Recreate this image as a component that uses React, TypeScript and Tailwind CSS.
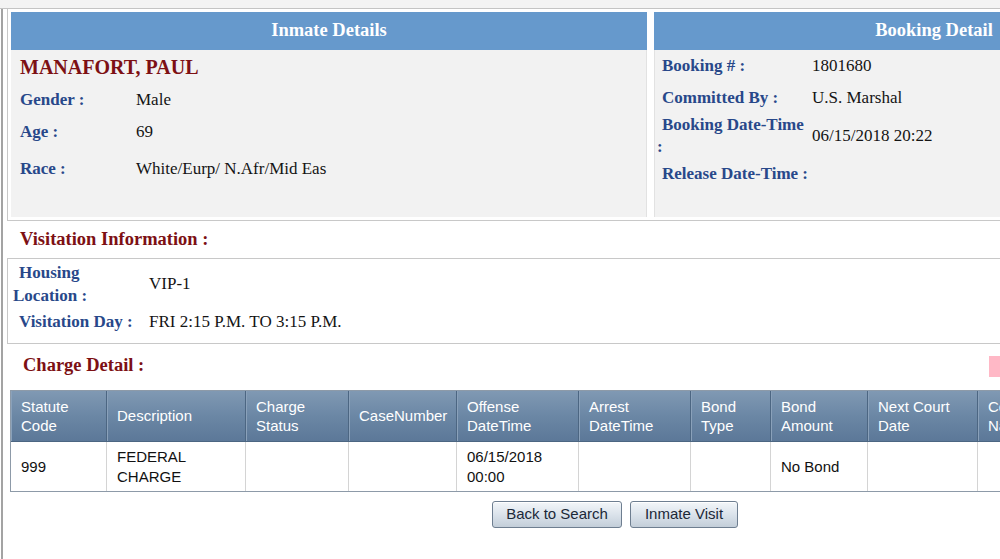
const cols = [
  { w: "w-[96px]", h: ["Statute", "Code"], v: ["999"] },
  { w: "w-[139px]", h: ["Description"], v: ["FEDERAL", "CHARGE"] },
  { w: "w-[103px]", h: ["Charge", "Status"], v: [] },
  { w: "w-[108px]", h: ["CaseNumber"], v: [] },
  { w: "w-[122px]", h: ["Offense", "DateTime"], v: ["06/15/2018", "00:00"] },
  { w: "w-[112px]", h: ["Arrest", "DateTime"], v: [] },
  { w: "w-[80px]", h: ["Bond", "Type"], v: [] },
  { w: "w-[97px]", h: ["Bond", "Amount"], v: ["No Bond"] },
  { w: "w-[110px]", h: ["Next Court", "Date"], v: [] },
  { w: "w-[130px]", h: ["Court", "Name"], v: [] },
];

function Label({ children }: { children: React.ReactNode }) {
  return <span className="font-bold text-[#28488a]">{children}</span>;
}

export default function App() {
  return (
    <div className="w-[1000px] h-[559px] overflow-hidden bg-white flex flex-col font-['Liberation_Serif','Times_New_Roman',serif] text-[17px] text-[#141414]">
      <div className="h-[9px] shrink-0 bg-[#f3f3f3] border-b border-[#c4c4c4]" />
      <div className="flex-1 ml-[1px] border-l-2 border-[#a3a3a3] pl-[4px] flex flex-col items-start">
        {/* Inmate + Booking details */}
        <div className="w-[1250px] shrink-0 border-l border-b border-[#c8c8c8] p-[3px] pr-0 flex gap-[7px]">
          <div className="w-[636px] shrink-0">
            <div className="h-[38px] bg-[#6699cc] flex items-center justify-center text-white font-bold text-[18.5px]">
              Inmate Details
            </div>
            <div className="h-[167px] bg-[#f2f2f2] border-r border-[#e2e2e2] pl-[9px]">
              <div className="h-[33px] flex items-center text-[20px] font-bold text-[#7d1014]">MANAFORT, PAUL</div>
              <div className="h-[34px] flex items-center">
                <div className="w-[116px]"><Label>Gender :</Label></div>
                <div>Male</div>
              </div>
              <div className="h-[30px] flex items-center">
                <div className="w-[116px]"><Label>Age :</Label></div>
                <div>69</div>
              </div>
              <div className="h-[44px] flex items-center">
                <div className="w-[116px]"><Label>Race :</Label></div>
                <div>White/Eurp/ N.Afr/Mid Eas</div>
              </div>
            </div>
          </div>
          <div className="w-[560px] shrink-0">
            <div className="h-[38px] bg-[#6699cc] flex items-center justify-center text-white font-bold text-[18.5px]">
              Booking Detail
            </div>
            <div className="h-[167px] bg-[#f2f2f2] border-l border-[#e2e2e2] pl-[2px]">
              <div className="h-[31px] flex items-center">
                <div className="w-[155px] pl-[5px]"><Label>Booking # :</Label></div>
                <div>1801680</div>
              </div>
              <div className="h-[33px] flex items-center">
                <div className="w-[155px] pl-[5px]"><Label>Committed By :</Label></div>
                <div>U.S. Marshal</div>
              </div>
              <div className="h-[44px] flex items-center">
                <div className="w-[155px] leading-[22px]">
                  <div className="pl-[5px]"><Label>Booking Date-Time</Label></div>
                  <div><Label>:</Label></div>
                </div>
                <div>06/15/2018 20:22</div>
              </div>
              <div className="h-[32px] flex items-center">
                <div className="pl-[5px]"><Label>Release Date-Time :</Label></div>
              </div>
            </div>
          </div>
        </div>

        {/* Visitation */}
        <div className="h-[37px] shrink-0 flex items-center pl-[13px] text-[18.5px] font-bold text-[#7d1014]">
          Visitation Information :
        </div>
        <div className="w-[1250px] h-[86px] shrink-0 border border-[#c8c8c8] pl-[5px]">
          <div className="h-[49px] flex items-center">
            <div className="w-[136px] leading-[23px]">
              <div className="pl-[6px]"><Label>Housing</Label></div>
              <div><Label>Location :</Label></div>
            </div>
            <div>VIP-1</div>
          </div>
          <div className="h-[28px] flex items-center">
            <div className="w-[136px] pl-[6px]"><Label>Visitation Day :</Label></div>
            <div>FRI 2:15 P.M. TO 3:15 P.M.</div>
          </div>
        </div>

        {/* Charges */}
        <div className="w-full h-[46px] shrink-0 flex items-center pb-[2px]">
          <div className="pl-[16px] text-[18.5px] font-bold text-[#7d1014]">Charge Detail :</div>
          <div className="ml-auto w-[11px] h-[21px] bg-[#ffb8c6]" />
        </div>
        <div className="ml-[3px] w-[1200px] shrink-0 border border-[#8d9aa8] font-['Liberation_Sans',Arial,sans-serif] text-[15px]">
          <div className="flex h-[51px] bg-linear-to-b from-[#8099b3] via-[#6b87a5] to-[#5c7898] border-b border-[#4c6682] text-white leading-[19.5px]">
            {cols.map((c) => (
              <div
                key={c.h.join()}
                className={`${c.w} shrink-0 pl-[10px] flex flex-col justify-center border-r border-[#4c6682] shadow-[inset_1px_0_0_#8aa1ba]`}
              >
                {c.h.map((t) => (
                  <div key={t} className="whitespace-nowrap">{t}</div>
                ))}
              </div>
            ))}
          </div>
          <div className="flex h-[49px] leading-[20px] text-[#111]">
            {cols.map((c) => (
              <div
                key={c.h.join()}
                className={`${c.w} shrink-0 pl-[10px] flex flex-col justify-center border-r border-[#d4d4d4]`}
              >
                {c.v.map((t) => (
                  <div key={t} className="whitespace-nowrap">{t}</div>
                ))}
              </div>
            ))}
          </div>
        </div>

        <div className="mt-[9px] ml-[485px] flex gap-[8px] font-['Liberation_Sans',Arial,sans-serif] text-[15px] text-[#1b2838]">
          <button className="w-[130px] h-[27px] rounded-[3px] border border-[#6e7e90] bg-linear-to-b from-[#f3f6f9] via-[#dbe3eb] to-[#c3ced9] shadow-[inset_0_1px_0_#ffffff]">
            Back to Search
          </button>
          <button className="w-[108px] h-[27px] rounded-[3px] border border-[#6e7e90] bg-linear-to-b from-[#f3f6f9] via-[#dbe3eb] to-[#c3ced9] shadow-[inset_0_1px_0_#ffffff]">
            Inmate Visit
          </button>
        </div>
      </div>
    </div>
  );
}
